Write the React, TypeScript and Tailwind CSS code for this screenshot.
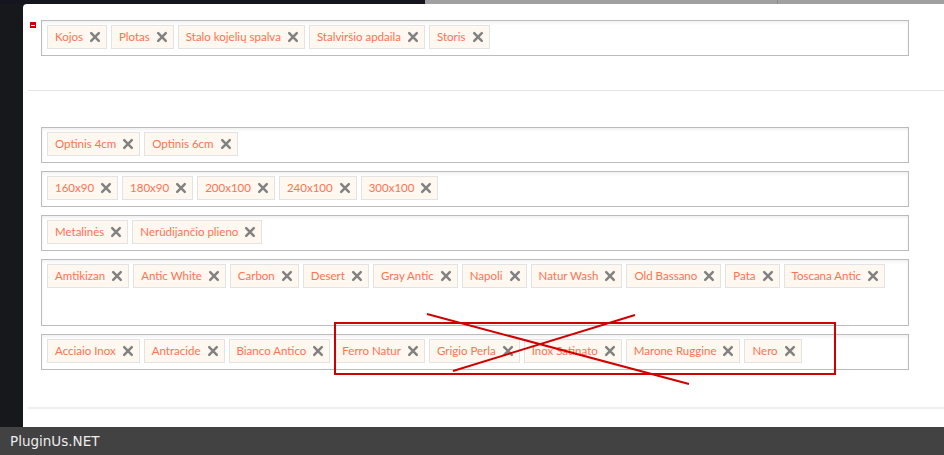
import React from 'react';

const rows: string[][] = [
  ['Optinis 4cm', 'Optinis 6cm'],
  ['160x90', '180x90', '200x100', '240x100', '300x100'],
  ['Metalinės', 'Nerūdijančio plieno'],
  ['Amtikizan', 'Antic White', 'Carbon', 'Desert', 'Gray Antic', 'Napoli', 'Natur Wash', 'Old Bassano', 'Pata', 'Toscana Antic'],
  ['Acciaio Inox', 'Antracide', 'Bianco Antico', 'Ferro Natur', 'Grigio Perla', 'Inox Satinato', 'Marone Ruggine', 'Nero'],
];

function Tag({ label }: { label: string }) {
  return (
    <span className="inline-flex items-center h-[24px] border border-[#e3e3e3] bg-[#fff8f0] pl-[7px] pr-[5px] text-[11.5px] text-[#ff7252] leading-none">
      <span>{label}</span>
      <svg className="ml-[6px] w-[12px] h-[12px]" viewBox="0 0 12 12">
        <path d="M2.2 2.2 L9.8 9.8 M9.8 2.2 L2.2 9.8" stroke="#828282" strokeWidth="2.5" strokeLinecap="round" />
      </svg>
    </span>
  );
}

function TagBox({ tags, tall = false }: { tags: string[]; tall?: boolean }) {
  return (
    <div
      className={`w-[868px] ${tall ? 'h-[67px]' : 'h-[36px]'} border border-[#bcbcbc] bg-white shadow-[inset_0_2px_3px_rgba(0,0,0,0.06)] pl-[5px] pt-[4px] flex flex-wrap content-start gap-[4px]`}
    >
      {tags.map((t) => (
        <Tag key={t} label={t} />
      ))}
    </div>
  );
}

export default function App() {
  return (
    <div
      className="relative w-[944px] h-[455px] overflow-hidden flex flex-col bg-[#17181c]"
      style={{ fontFamily: 'Lato, "Open Sans", sans-serif' }}
    >
      {/* backdrop strip above the modal */}
      <div className="h-[4px] flex shrink-0">
        <div className="w-[425px] bg-[#15151f]" />
        <div className="flex-1 bg-[#a0a0a0] flex">
          <div className="ml-[352px] w-px bg-[#8c8c8c]" />
        </div>
      </div>

      <div className="flex flex-1 min-h-0">
        <div className="w-[23px] shrink-0" />
        <div className="flex-1 bg-white rounded-tl-[4px] pt-[16px]">
          <div className="flex items-start">
            <div className="ml-[7px] mt-[2px] w-[6px] h-[6px] bg-[#d40000] flex items-center justify-center">
              <div className="w-[4px] h-[1px] bg-white" />
            </div>
            <div className="ml-[5px]">
              <TagBox tags={['Kojos', 'Plotas', 'Stalo kojelių spalva', 'Stalviršio apdaila', 'Storis']} />
            </div>
          </div>

          <div className="ml-[5px] mt-[34px] h-px bg-[#e6e6e6]" />

          <div className="ml-[18px] mt-[36px] flex flex-col gap-[8px]">
            {rows.map((r, i) => (
              <TagBox key={i} tags={r} tall={i === 3} />
            ))}
          </div>

          <div className="ml-[5px] mt-[37px] h-[2px] bg-[#efefef]" />
        </div>
      </div>

      <div
        className="h-[28px] shrink-0 bg-[#424242] flex items-center pl-[10px] text-[13.5px] text-[#ececec]"
        style={{ fontFamily: '"DejaVu Sans", sans-serif' }}
      >
        PluginUs.NET
      </div>

      {/* red annotation over the last row */}
      <svg className="absolute inset-0 pointer-events-none" width="944" height="455" viewBox="0 0 944 455">
        <rect x="335" y="323" width="500" height="51" fill="none" stroke="#d10000" strokeWidth="2" />
        <line x1="427" y1="314" x2="689" y2="384" stroke="#d10000" strokeWidth="2" />
        <line x1="453" y1="371" x2="635" y2="315" stroke="#d10000" strokeWidth="2" />
      </svg>
    </div>
  );
}
